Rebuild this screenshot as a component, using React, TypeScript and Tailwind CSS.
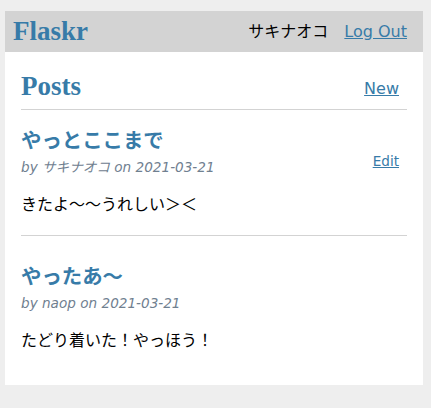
import React from "react";

const serif = "font-['Liberation_Serif','Noto_Sans_CJK_JP',serif]";

function Post({ title, author, date, body, editable }: { title: string; author: string; date: string; body: string; editable: boolean }) {
  return (
    <article>
      <header className="flex items-end text-[13.6px]">
        <div className="flex-auto">
          <h1 className={`${serif} mt-4 mb-0 text-[20.4px] leading-[30.6px] font-bold text-[#377ba8]`}>{title}</h1>
          <div className="italic text-[#708090] leading-[20.4px]">
            by {author} on {date}
          </div>
        </div>
        {editable && (
          <a href="#" className="block p-2 pb-[6px] leading-[20.4px] text-[#377ba8] underline">
            Edit
          </a>
        )}
      </header>
      <p className="my-4 text-base leading-6 whitespace-pre-line">{body}</p>
    </article>
  );
}

export default function App() {
  return (
    <div className="min-h-screen bg-[#eeeeee] pt-[11px] pl-[5px] font-['DejaVu_Sans','Noto_Sans_CJK_JP',sans-serif] text-black">
      <div className="w-[418px] bg-white">
        <nav className="flex items-center h-[41px] px-2 bg-[#d3d3d3]">
          <h1 className={`${serif} flex-auto m-0 text-[27px] leading-[37px] font-bold`}>
            <a href="#" className="text-[#377ba8] no-underline">Flaskr</a>
          </h1>
          <ul className="flex list-none m-0 p-0">
            <li>
              <span className="block p-2 text-base leading-6">サキナオコ</span>
            </li>
            <li>
              <a href="#" className="block p-2 text-base leading-6 text-[#377ba8] underline">Log Out</a>
            </li>
          </ul>
        </nav>
        <section className="px-4 pb-4">
          <header className="flex items-end border-b border-[#d3d3d3]">
            <h1 className={`${serif} flex-auto mt-4 mb-1 text-[27px] leading-[37px] font-bold text-[#377ba8]`}>Posts</h1>
            <a href="#" className="block p-2 text-base leading-6 text-[#377ba8] underline">New</a>
          </header>
          <Post title="やっとここまで" author="サキナオコ" date="2021-03-21" body="きたよ〜〜うれしい＞＜" editable={true} />
          <hr className="border-0 border-t border-[#d3d3d3] mt-[18px] mb-[10px] h-0" />
          <Post title="やったあ〜" author="naop" date="2021-03-21" body="たどり着いた！やっほう！" editable={false} />
        </section>
      </div>
    </div>
  );
}
